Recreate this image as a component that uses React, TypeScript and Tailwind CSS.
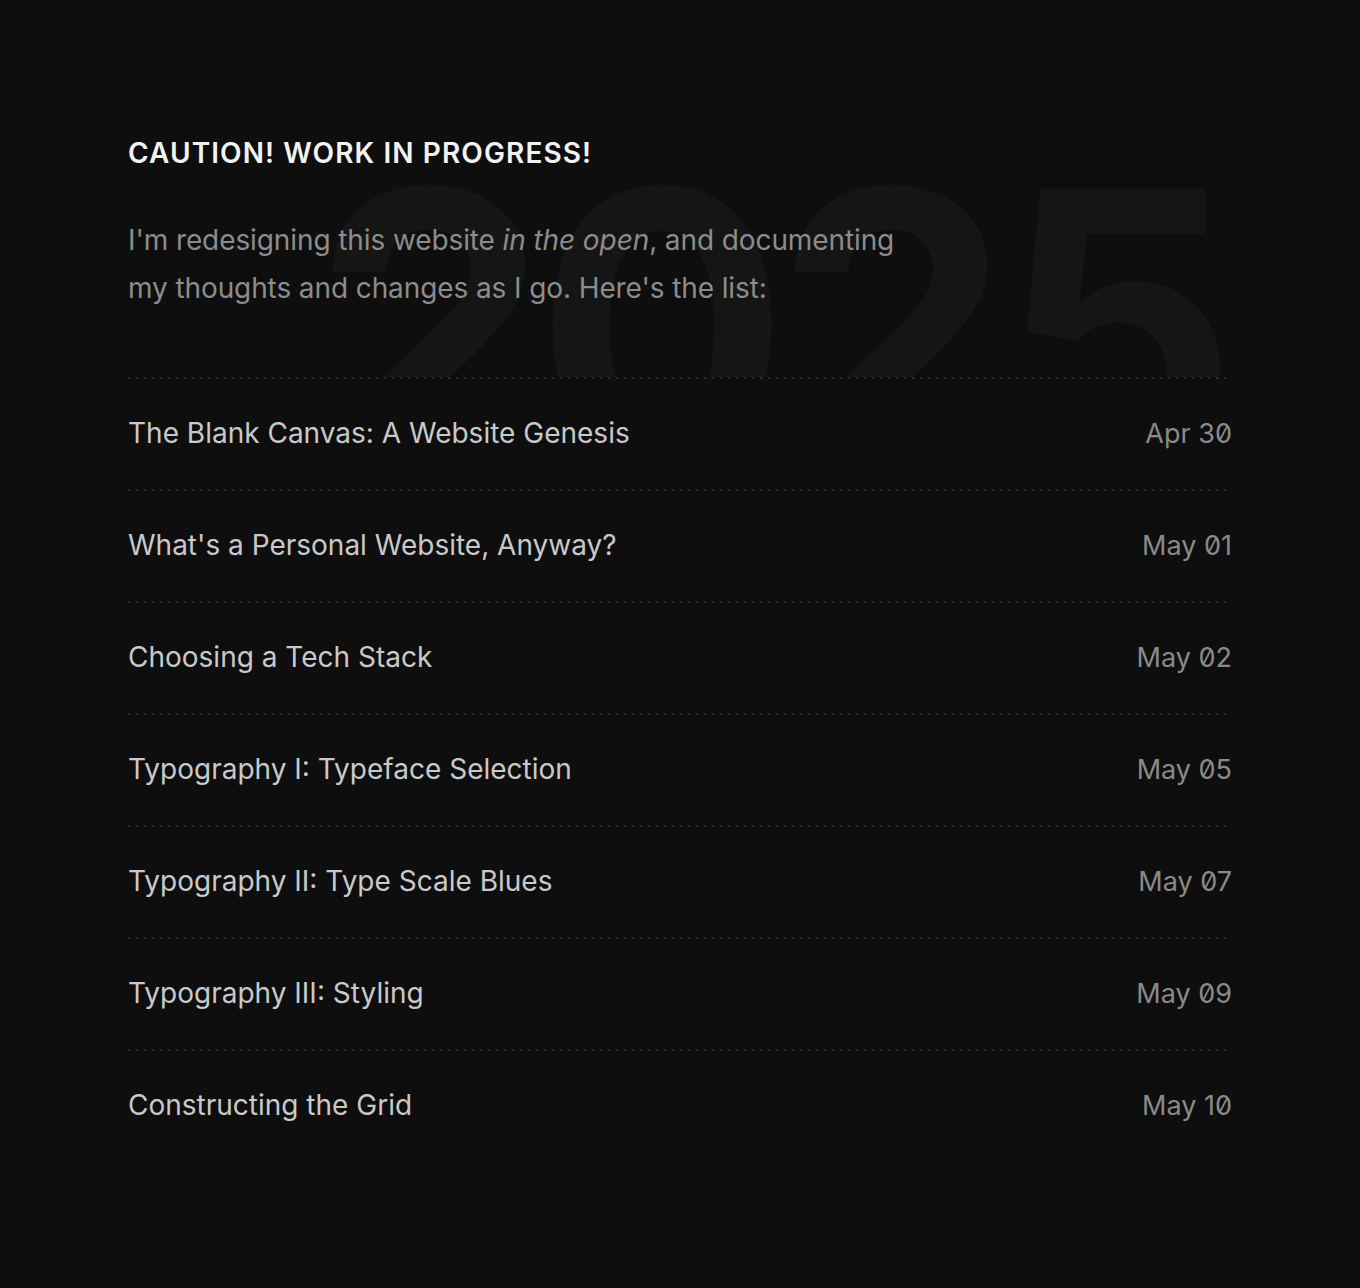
const posts = [
  { title: "The Blank Canvas: A Website Genesis", date: "Apr 30" },
  { title: "What's a Personal Website, Anyway?", date: "May 01" },
  { title: "Choosing a Tech Stack", date: "May 02" },
  { title: "Typography I: Typeface Selection", date: "May 05" },
  { title: "Typography II: Type Scale Blues", date: "May 07" },
  { title: "Typography III: Styling", date: "May 09" },
  { title: "Constructing the Grid", date: "May 10" },
];

function Dots() {
  return (
    <div className="h-[2px] w-full bg-[linear-gradient(to_right,#303030_2px,transparent_2px)] bg-[length:8px_2px] bg-repeat-x bg-right" />
  );
}

export default function App() {
  return (
    <div className="min-h-[1288px] bg-[#0e0e0e] px-[128px] pt-[132px] font-['Inter',sans-serif]">
      <div className="relative overflow-hidden pb-[65px]">
        <div className="pointer-events-none absolute right-[8px] top-[6px] select-none text-[376px] font-bold leading-none tracking-[-14px] text-[#151515]">
          2025
        </div>
        <h1 className="relative text-[28px] font-semibold tracking-[1.1px] text-[#f2f2f2]">
          CAUTION! WORK IN PROGRESS!
        </h1>
        <p className="relative mt-[42px] max-w-[790px] text-[28px] leading-[48px] tracking-[-0.1px] text-[#8c8c8c]">
          I'm redesigning this website <em>in the open</em>, and documenting
          my thoughts and changes as I go. Here's the list:
        </p>
      </div>
      <ul>
        {posts.map((p) => (
          <li key={p.title}>
            <Dots />
            <div className="flex h-[110px] items-center justify-between pb-[3px]">
              <span className="text-[28px] text-[#c9c9c9]">{p.title}</span>
              <span className="mt-[3px] slashed-zero text-[27px] text-[#8a8a8a]">{p.date}</span>
            </div>
          </li>
        ))}
      </ul>
    </div>
  );
}
